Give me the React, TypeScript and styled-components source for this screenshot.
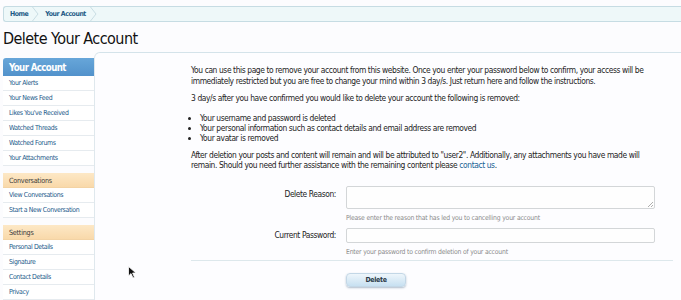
import React from "react";
import styled, { createGlobalStyle } from "styled-components";

const FONT = `"DejaVu Sans Condensed", "Liberation Sans Narrow", "Arial Narrow", sans-serif`;

const Global = createGlobalStyle`
  html, body { margin: 0; padding: 0; background: #fcfcfe; }
  body { font-family: ${FONT}; color: #222; overflow: hidden; }
  * { box-sizing: border-box; }
`;

const Page = styled.div`
  position: relative;
  width: 681px;
  height: 300px;
  padding: 6px 0 0 3px;
  overflow: hidden;
`;

const Crumbs = styled.nav`
  display: flex;
  align-items: center;
  height: 16px;
  background: #eef8f9;
  border: 1px solid #c6dce3;
  border-right: none;
  border-radius: 3px 0 0 3px;
`;

const Crumb = styled.span`
  display: flex;
  align-items: center;
  height: 100%;
  padding-left: 6px;
  font-size: 6.9px;
  letter-spacing: -0.45px;
  font-weight: bold;
  color: #1d5a86;
  white-space: nowrap;
`;

const Chevron = () => (
  <svg width="7" height="14" viewBox="0 0 7 14" style={{ marginLeft: 4 }}>
    <polyline points="0.5,0 6,7 0.5,14" fill="none" stroke="#c9dde4" strokeWidth="1" />
  </svg>
);

const Title = styled.h1`
  margin: 7px 0 0;
  height: 23px;
  font-size: 16px;
  line-height: 20px;
  letter-spacing: -0.55px;
  font-weight: normal;
  color: #111;
`;

const Main = styled.div`
  display: flex;
  align-items: flex-start;
`;

const Sidebar = styled.aside`
  width: 91px;
  flex-shrink: 0;
  margin-top: 6px;
`;

const SideHead = styled.div`
  height: 18px;
  padding-left: 6px;
  display: flex;
  align-items: center;
  font-size: 9.6px;
  letter-spacing: -0.6px;
  font-weight: bold;
  color: #fff;
  background: linear-gradient(#67a6d9, #5292cb);
  border-radius: 3px 0 0 0;
  white-space: nowrap;
`;

const Group = styled.div`
  margin-top: 7px;
`;

const SectionHead = styled.div`
  height: 15px;
  padding-left: 6px;
  display: flex;
  align-items: center;
  font-size: 7.2px;
  letter-spacing: -0.25px;
  color: #3a3a3a;
  background: linear-gradient(#fde8c6, #f9d9aa);
  border-bottom: 1px solid #f3d3a4;
  white-space: nowrap;
`;

const Item = styled.div`
  height: 15px;
  padding-left: 6px;
  display: flex;
  align-items: center;
  font-size: 6.9px;
  letter-spacing: -0.38px;
  color: #22598a;
  background: #fff;
  border-bottom: 1px solid #e6ebef;
  white-space: nowrap;
`;

const Panel = styled.section`
  flex: 1;
  min-height: 260px;
  border-top: 1px solid #d4e3ea;
  border-left: 1px solid #dfe8ed;
  border-top-left-radius: 6px;
  background: #fdfdff;
  padding: 12px 8px 0 96px;
`;

const Para = styled.p<{ $mb?: number }>`
  margin: 0 0 ${(p) => p.$mb ?? 8}px;
  font-size: 8.4px;
  line-height: 10.5px;
  letter-spacing: -0.4px;
`;

const List = styled.ul`
  margin: 0 0 7px;
  padding-left: 9px;
  font-size: 8.4px;
  line-height: 10px;
  letter-spacing: -0.4px;
`;

const Link = styled.a`
  color: #176093;
  text-decoration: none;
`;

const Form = styled.div`
  display: grid;
  grid-template-columns: 145px 309px;
  column-gap: 10px;
  row-gap: 5px;
  margin-top: 15.5px;
`;

const Label = styled.label<{ $pt: number }>`
  text-align: right;
  font-size: 8.4px;
  line-height: 10.5px;
  letter-spacing: -0.4px;
  padding-top: ${(p) => p.$pt}px;
  white-space: nowrap;
`;

const Field = styled.div`
  display: flex;
  flex-direction: column;
`;

const TextArea = styled.div`
  position: relative;
  height: 23px;
  border: 1px solid #d3d6d8;
  border-radius: 2px;
  background: #fefefe;
`;

const Grip = styled.svg`
  position: absolute;
  right: 1px;
  bottom: 1px;
`;

const Input = styled.div`
  height: 15px;
  border: 1px solid #d3d6d8;
  border-radius: 2px;
  background: #fefefe;
`;

const Hint = styled.div`
  font-size: 6.8px;
  line-height: 10px;
  letter-spacing: -0.2px;
  color: #8a8a8a;
  margin-top: 4px;
  white-space: nowrap;
`;

const Rule = styled.hr`
  margin: 3px 0 0;
  border: none;
  border-top: 1px solid #dde8ec;
`;

const Actions = styled.div`
  padding: 12px 0 0 155px;
`;

const Button = styled.button`
  display: block;
  width: 60px;
  height: 14px;
  padding: 0;
  border: 1px solid #c3d7e6;
  border-radius: 4px;
  background: linear-gradient(#eef6fb, #c7e0f1);
  box-shadow: 0 1px 2px rgba(80, 110, 140, 0.45);
  font-family: ${FONT};
  font-size: 7px;
  letter-spacing: -0.35px;
  font-weight: bold;
  color: #2b3a48;
`;

const Cursor = styled.svg`
  position: absolute;
  left: 128px;
  top: 266px;
`;

const nav = [
  "Your Alerts",
  "Your News Feed",
  "Likes You've Received",
  "Watched Threads",
  "Watched Forums",
  "Your Attachments",
];

const groups = [
  { title: "Conversations", items: ["View Conversations", "Start a New Conversation"] },
  { title: "Settings", items: ["Personal Details", "Signature", "Contact Details", "Privacy"] },
];

export default function App() {
  return (
    <>
      <Global />
      <Page>
        <Crumbs>
          <Crumb>Home<Chevron /></Crumb>
          <Crumb>Your Account<Chevron /></Crumb>
        </Crumbs>
        <Title>Delete Your Account</Title>
        <Main>
          <Sidebar>
            <SideHead>Your Account</SideHead>
            {nav.map((n) => (
              <Item key={n}>{n}</Item>
            ))}
            {groups.map((g) => (
              <Group key={g.title}>
                <SectionHead>{g.title}</SectionHead>
                {g.items.map((n) => (
                  <Item key={n}>{n}</Item>
                ))}
              </Group>
            ))}
          </Sidebar>
          <Panel>
            <Para $mb={7}>
              You can use this page to remove your account from this website. Once you enter your password below to
              confirm, your access will be immediately restricted but you are free to change your mind within 3 day/s.
              Just return here and follow the instructions.
            </Para>
            <Para $mb={9}>3 day/s after you have confirmed you would like to delete your account the following is removed:</Para>
            <List>
              <li>Your username and password is deleted</li>
              <li>Your personal information such as contact details and email address are removed</li>
              <li>Your avatar is removed</li>
            </List>
            <Para>
              After deletion your posts and content will remain and will be attributed to "user2". Additionally, any
              attachments you have made will
              <br />
              remain. Should you need further assistance with the remaining content please{" "}
              <Link href="#">contact us</Link>.
            </Para>
            <Form>
              <Label $pt={3}>Delete Reason:</Label>
              <Field>
                <TextArea>
                  <Grip width="6" height="6" viewBox="0 0 6 6">
                    <path d="M1 6 L6 1 M4 6 L6 4" stroke="#999" strokeWidth="0.8" />
                  </Grip>
                </TextArea>
                <Hint>Please enter the reason that has led you to cancelling your account</Hint>
              </Field>
              <Label $pt={2}>Current Password:</Label>
              <Field>
                <Input />
                <Hint>Enter your password to confirm deletion of your account</Hint>
              </Field>
            </Form>
            <Rule />
            <Actions>
              <Button>Delete</Button>
            </Actions>
          </Panel>
        </Main>
        <Cursor width="9" height="13" viewBox="0 0 9 13">
          <path d="M0.5 0.5 L0.5 10 L3 7.6 L5 12 L6.5 11.3 L4.6 7 L8 7 Z" fill="#111" stroke="#fff" strokeWidth="0.8" />
        </Cursor>
      </Page>
    </>
  );
}
